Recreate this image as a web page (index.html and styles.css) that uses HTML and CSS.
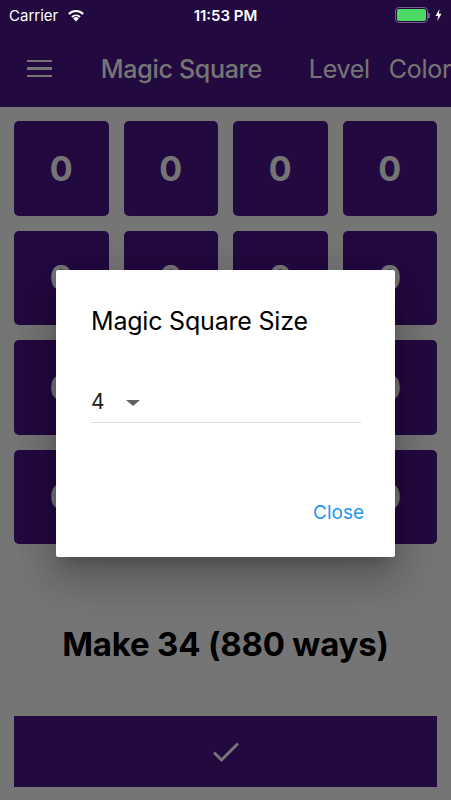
FILE: index.html
```html
<!DOCTYPE html>
<html lang="en">
<head>
    <meta charset="UTF-8">
    <meta name="viewport" content="width=device-width, initial-scale=1.0">
    <title>Magic Square</title>
    <link rel="stylesheet" href="styles.css">
</head>
<body>

    <div class="status-bar">
        <div class="status-left">
            <span>Carrier</span>
            <svg class="wifi" width="18" height="13" viewBox="0 0 18 13">
                <path d="M9 12.5 L6.2 9.4 A4 4 0 0 1 11.8 9.4 Z" fill="#fff"/>
                <path d="M4.3 7.3 A6.8 6.8 0 0 1 13.7 7.3 L12.4 8.7 A5 5 0 0 0 5.6 8.7 Z" fill="#fff"/>
                <path d="M1.2 4.3 A11 11 0 0 1 16.8 4.3 L15.4 5.7 A9 9 0 0 0 2.6 5.7 Z" fill="#fff"/>
            </svg>
        </div>
        <div class="status-time">11:53 PM</div>
        <div class="status-right">
            <div class="battery"><div class="battery-level"></div></div>
            <div class="battery-tip"></div>
            <svg class="bolt" width="7" height="12" viewBox="0 0 7 12">
                <path d="M4.5 0 L0.5 7 L3.2 7 L2.3 12 L6.5 4.8 L3.8 4.8 Z" fill="#fff"/>
            </svg>
        </div>
    </div>

    <header class="app-bar">
        <div class="menu-icon">
            <span></span><span></span><span></span>
        </div>
        <div class="app-title">Magic Square</div>
        <div class="app-actions">
            <span>Level</span>
            <span>Color</span>
        </div>
    </header>

    <main class="content">
        <div class="board" id="board"></div>

        <div class="target">Make 34 (880 ways)</div>

        <button class="check-button">
            <svg width="28" height="22" viewBox="0 0 28 22">
                <path d="M2 11.5 L9.5 19 L26 2.5" fill="none" stroke="#fff" stroke-width="3"/>
            </svg>
        </button>
    </main>

    <div class="overlay"></div>

    <div class="dialog">
        <h2 class="dialog-title">Magic Square Size</h2>
        <div class="select">
            <span class="select-value">4</span>
            <span class="select-arrow"></span>
        </div>
        <div class="dialog-actions">
            <button class="text-button">Close</button>
        </div>
    </div>

    <script>
        // 4x4 board, all cells empty
        const board = document.getElementById('board');
        for (let i = 0; i < 16; i++) {
            const cell = document.createElement('div');
            cell.className = 'cell';
            cell.textContent = '0';
            board.appendChild(cell);
        }
    </script>

</body>
</html>
```

FILE: styles.css
```css
body {
    margin: 0;
    width: 451px;
    height: 800px;
    overflow: hidden;
    position: relative;
    background-color: #fff;
    font-family: Inter, Roboto, "Liberation Sans", sans-serif;
}

/* status bar sits above the dim layer, so it gets the dimmed purple itself */
.status-bar {
    height: 30px;
    background-color: #220940;
    color: #fff;
    font-size: 15px;
    display: flex;
    align-items: center;
    justify-content: space-between;
    padding: 0 9px;
    position: relative;
    z-index: 3;
}

.status-left {
    display: flex;
    align-items: center;
    gap: 9px;
    width: 120px;
}

.status-time {
    font-weight: 600;
}

.status-right {
    display: flex;
    align-items: center;
    justify-content: flex-end;
    width: 120px;
}

.battery {
    width: 29px;
    height: 12px;
    border: 1.5px solid #6e6188;
    border-radius: 4px;
    padding: 1px;
}

.battery-level {
    height: 100%;
    background-color: #4cd964;
    border-radius: 2px;
}

.battery-tip {
    width: 2px;
    height: 5px;
    background-color: #6e6188;
    border-radius: 0 1px 1px 0;
    margin-right: 5px;
}

.app-bar {
    height: 77px;
    background-color: #4a148c;
    display: flex;
    align-items: center;
    color: #fff;
    white-space: nowrap;
}

.menu-icon {
    width: 26px;
    margin-left: 27px;
    margin-right: 49px;
    display: flex;
    flex-direction: column;
    gap: 5px;
}

.menu-icon span {
    display: block;
    height: 2.5px;
    background-color: #fff;
}

.app-title {
    font-size: 25px;
    font-weight: 500;
    letter-spacing: -0.3px;
}

.app-actions {
    margin-left: 47px;
    display: flex;
    gap: 19px;
    font-size: 25px;
    letter-spacing: -0.3px;
}

.content {
    padding: 14px 14px 0;
}

.board {
    display: grid;
    grid-template-columns: repeat(4, 1fr);
    grid-auto-rows: 94.5px;
    gap: 15px;
}

.cell {
    background-color: #4a148c;
    border-radius: 5px;
    color: #fff;
    font-size: 34px;
    font-weight: bold;
    display: flex;
    align-items: center;
    justify-content: center;
}

.target {
    margin-top: 80px;
    text-align: center;
    font-size: 33px;
    font-weight: bold;
    letter-spacing: -0.2px;
    color: #000;
}

.check-button {
    margin-top: 52px;
    width: 100%;
    height: 71px;
    border: none;
    background-color: #4a148c;
    display: flex;
    align-items: center;
    justify-content: center;
    padding: 0;
}

.overlay {
    position: absolute;
    inset: 0;
    background-color: rgba(0, 0, 0, 0.54);
    z-index: 1;
}

.dialog {
    position: absolute;
    left: 56px;
    top: 270px;
    width: 339px;
    height: 287px;
    box-sizing: border-box;
    padding: 36px 34px 0 35px;
    background-color: #fff;
    border-radius: 2px;
    box-shadow: 0 11px 15px -7px rgba(0, 0, 0, 0.2), 0 24px 38px 3px rgba(0, 0, 0, 0.14), 0 9px 46px 8px rgba(0, 0, 0, 0.12);
    z-index: 2;
    display: flex;
    flex-direction: column;
}

.dialog-title {
    margin: 0;
    font-size: 25px;
    font-weight: normal;
    letter-spacing: -0.2px;
    color: #000;
}

.select {
    margin-top: 54px;
    height: 32px;
    border-bottom: 1px solid #dcdcdc;
    display: flex;
    align-items: flex-start;
    gap: 21px;
    color: #212121;
}

.select-value {
    font-size: 21px;
    line-height: 24px;
}

.select-arrow {
    margin-top: 10px;
    width: 0;
    height: 0;
    border-left: 7px solid transparent;
    border-right: 7px solid transparent;
    border-top: 6px solid #616161;
}

.dialog-actions {
    margin-top: auto;
    margin-bottom: 33px;
    display: flex;
    justify-content: flex-end;
    margin-right: -3px;
}

.text-button {
    border: none;
    background: none;
    padding: 0;
    font-family: Inter, Roboto, "Liberation Sans", sans-serif;
    font-size: 19px;
    color: #2196f3;
}
```
